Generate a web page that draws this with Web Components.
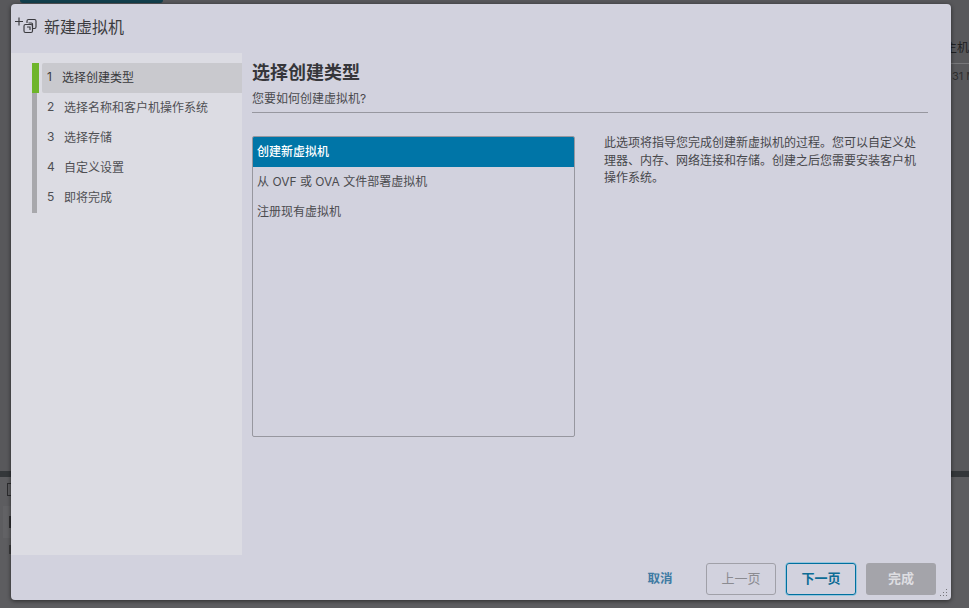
<!DOCTYPE html>
<html lang="zh"><head><meta charset="utf-8">
<style>
html,body{margin:0;height:100%;overflow:hidden}
body{font-family:Inter,"Noto Sans CJK SC",sans-serif}
</style></head>
<body>
<vm-backdrop>
  <vm-dialog heading="新建虚拟机">
    <vm-steps slot="side">
      <vm-step num="1" active>选择创建类型</vm-step>
      <vm-step num="2">选择名称和客户机操作系统</vm-step>
      <vm-step num="3">选择存储</vm-step>
      <vm-step num="4">自定义设置</vm-step>
      <vm-step num="5">即将完成</vm-step>
    </vm-steps>
    <vm-page heading="选择创建类型" sub="您要如何创建虚拟机?">
      <vm-list slot="list">
        <vm-option selected>创建新虚拟机</vm-option>
        <vm-option>从 OVF 或 OVA 文件部署虚拟机</vm-option>
        <vm-option>注册现有虚拟机</vm-option>
      </vm-list>
      此选项将指导您完成创建新虚拟机的过程。您可以自定义处理器、内存、网络连接和存储。创建之后您需要安装客户机操作系统。
    </vm-page>
    <vm-btn slot="foot" kind="link">取消</vm-btn>
    <vm-btn slot="foot" kind="off">上一页</vm-btn>
    <vm-btn slot="foot" kind="next">下一页</vm-btn>
    <vm-btn slot="foot" kind="fill">完成</vm-btn>
  </vm-dialog>
</vm-backdrop>
<script>
function def(name, css, html){
  customElements.define(name, class extends HTMLElement{
    connectedCallback(){
      if(this.shadowRoot) return;
      const r=this.attachShadow({mode:'open'});
      r.innerHTML='<style>'+css+'</style>'+(typeof html==='function'?html(this):html);
    }
  });
}
def('vm-backdrop',`
:host{display:block;position:relative;width:969px;height:608px;background:#58585b;overflow:hidden;color:#3c3c3f}
.top{position:absolute;left:20px;top:0;width:143px;height:3px;background:#123f4d;border-radius:0 0 3px 3px}
.band{position:absolute;left:0;right:0;top:471px;height:6px;background:#34373a}
.low{position:absolute;left:0;right:0;top:477px;height:131px;background:#5d5d60}
.cell{position:absolute;left:3px;top:506px;width:8px;height:32px;background:#626265}
.ic{position:absolute;left:7px;top:483px;width:4px;height:13px;border:1px solid #2c2c2e;border-right:0;box-sizing:border-box}
.g1{position:absolute;left:9px;top:516px;width:2px;height:12px;background:#2f2f31}
.g2{position:absolute;left:9px;top:545px;width:2px;height:9px;background:#3a3a3c}
.rt{position:absolute;right:0;top:41px;font-size:12px;line-height:14px;color:#202022;white-space:nowrap}
.rl{position:absolute;left:951px;right:0;top:63px;height:1px;background:#77777a}
.rs{position:absolute;left:952px;top:70px;font-size:11px;line-height:13px;color:#2d2d2f;white-space:nowrap}
`,`<div class="top"></div><div class="low"></div><div class="band"></div><div class="ic"></div><div class="cell"></div><div class="g1"></div><div class="g2"></div>
<div class="rt">主机</div><div class="rl"></div><div class="rs">31 M</div><slot></slot>`);
def('vm-dialog',`
:host{position:absolute;left:11px;top:4px;width:940px;height:596px;background:#d2d2de;border-radius:4px;box-shadow:0 1px 4px rgba(0,0,0,.55);display:grid;grid-template-rows:49px 502px 45px;grid-template-columns:231px 1fr}
.hd{grid-column:1/3;display:flex;align-items:center;padding-left:4px;font-size:16px;color:#3c3c40;padding-bottom:6px;box-sizing:border-box}
.hd svg{flex:none;margin-top:1px}
.hd span{margin-left:5px}
.side{background:#dcdce3;padding:10px 0 0 21px}
.ft{grid-column:1/3;display:flex;align-items:center;justify-content:flex-end;gap:10px;padding:3px 15px 0 0;box-sizing:border-box;position:relative}
.grip{position:absolute;right:3px;bottom:3px}
`,h=>`<div class="hd"><svg width="24" height="24" viewBox="0 0 24 24" fill="none" stroke="#3a3a3e" stroke-width="1.150"><path d="M0 7.500h8M4 3.500v8"/><path d="M12 9V7a1.500 1.500 0 0 1 1.500-1.500h6a1.500 1.500 0 0 1 1.500 1.500v6a1.500 1.500 0 0 1-1.500 1.500H18"/><path d="M13.500 9h3a1 1 0 0 1 1 1v3"/><rect x="9" y="10.500" width="8.500" height="8" rx="1.500"/><path d="M12 13h3v3"/></svg><span>${h.getAttribute('heading')}</span></div>
<div class="side"><slot name="side"></slot></div><slot></slot>
<div class="ft"><slot name="foot"></slot><svg class="grip" width="8" height="8" viewBox="0 0 8 8" fill="#77777c"><rect x="6" y="0" width="1" height="1"/><rect x="3" y="3" width="1" height="1"/><rect x="6" y="3" width="1" height="1"/><rect x="0" y="6" width="1" height="1"/><rect x="3" y="6" width="1" height="1"/><rect x="6" y="6" width="1" height="1"/></svg></div>`);
def('vm-steps',`:host{display:block;width:210px;background:linear-gradient(#a8a8ac,#a8a8ac) 0 0/5px 150px no-repeat}`,`<slot></slot>`);
def('vm-step',`
:host{display:flex;align-items:center;height:30px;margin-left:10px;font-size:12px;color:#4f4f53;position:relative;white-space:nowrap;padding-bottom:3px;box-sizing:border-box}
:host([active]){background:#c9c9ce;color:#3a3a3d;border-radius:2px 0 0 2px}
:host([active])::before{content:"";position:absolute;left:-10px;top:0;width:7px;height:30px;background:#6eb52a}
.n{width:22px;padding-left:5px;box-sizing:border-box;flex:none}
:host([active]) .n{width:20px}
`,h=>`<span class="n">${h.getAttribute('num')}</span><slot></slot>`);
def('vm-page',`
:host{display:block;padding:9px 23px 0 10px;box-sizing:border-box;color:#3c3c3f}
h2{margin:0;font-size:18px;line-height:22px;font-weight:700;color:#36363a}
.sub{font-size:12px;line-height:16px;margin-top:7px;padding-bottom:5px;border-bottom:1px solid #97979f;color:#4a4a4e}
.row{display:flex;margin-top:23px;gap:29px}
.txt{width:320px;font-size:12px;line-height:17.500px;color:#47474b;margin-top:-2px}
`,h=>`<h2>${h.getAttribute('heading')}</h2><div class="sub">${h.getAttribute('sub')}</div><div class="row"><slot name="list"></slot><div class="txt"><slot></slot></div></div>`);
def('vm-list',`:host{display:block;flex:none;width:323px;height:301px;box-sizing:border-box;border:1px solid #97979f;border-radius:2px;overflow:hidden}`,`<slot></slot>`);
def('vm-option',`
:host{display:flex;align-items:center;height:30px;padding:0 0 3px 4px;box-sizing:border-box;font-size:12px;color:#4b4b4f;white-space:pre}
:host([selected]){background:#0075a7;color:#fff;font-weight:500}
`,`<slot></slot>`);
def('vm-btn',`
:host{display:flex;align-items:center;justify-content:center;box-sizing:border-box;width:70px;height:32px;padding-bottom:4px;font-size:13px;border-radius:3px;font-weight:700}
:host([kind=link]){color:#3f7ba3;font-size:12.500px;padding-right:2px}
:host([kind=off]){border:1px solid #a0a0a8;color:#8b8b91;font-weight:400}
:host([kind=next]){border:1px solid #00709f;color:#0d6c95;box-shadow:0 0 0 .5px #5ab8dc}
:host([kind=fill]){background:#a4a4aa;color:#dedee2}
`,`<slot></slot>`);
</script>
</body></html>
